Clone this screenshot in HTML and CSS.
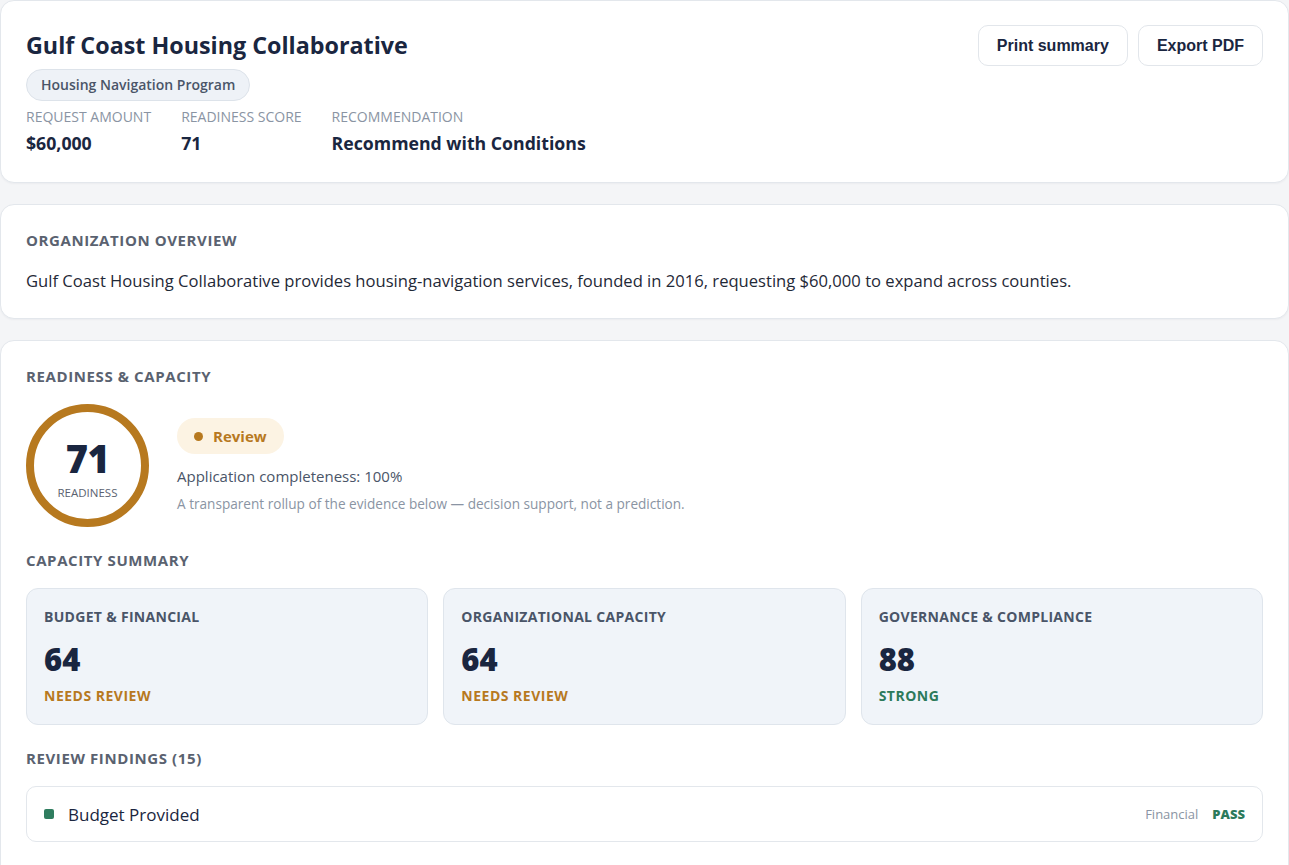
FILE: index.html
```html
<!DOCTYPE html>
<html lang="en">
<head>
  <meta charset="UTF-8" />
  <meta name="viewport" content="width=device-width, initial-scale=1.0" />
  <title>Gulf Coast Housing Collaborative - Review Summary</title>
  <link rel="stylesheet" href="styles.css">
</head>
<body>
  <main class="page">
    <!-- Header card -->
    <section class="card header-card">
      <div class="header-main">
        <h1>Gulf Coast Housing Collaborative</h1>
        <span class="program-pill">Housing Navigation Program</span>
        <div class="meta">
          <div class="meta-item">
            <div class="meta-label">Request Amount</div>
            <div class="meta-value">$60,000</div>
          </div>
          <div class="meta-item">
            <div class="meta-label">Readiness Score</div>
            <div class="meta-value">71</div>
          </div>
          <div class="meta-item">
            <div class="meta-label">Recommendation</div>
            <div class="meta-value">Recommend with Conditions</div>
          </div>
        </div>
      </div>
      <div class="actions">
        <button class="action-btn">Print summary</button>
        <button class="action-btn">Export PDF</button>
      </div>
    </section>

    <!-- Overview -->
    <section class="card">
      <h2 class="section-title">Organization Overview</h2>
      <p class="overview-text">Gulf Coast Housing Collaborative provides housing-navigation services, founded in 2016, requesting $60,000 to expand across counties.</p>
    </section>

    <!-- Readiness -->
    <section class="card readiness-card">
      <h2 class="section-title">Readiness &amp; Capacity</h2>
      <div class="readiness">
        <div class="score-ring">
          <span class="score-number">71</span>
          <span class="score-label">Readiness</span>
        </div>
        <div class="readiness-info">
          <span class="status-pill review"><span class="status-dot"></span>Review</span>
          <div class="completeness">Application completeness: 100%</div>
          <div class="readiness-note">A transparent rollup of the evidence below — decision support, not a prediction.</div>
        </div>
      </div>

      <h2 class="section-title spaced">Capacity Summary</h2>
      <div class="capacity-grid">
        <div class="capacity-card">
          <div class="capacity-label">Budget &amp; Financial</div>
          <div class="capacity-score">64</div>
          <div class="capacity-status review">Needs Review</div>
        </div>
        <div class="capacity-card">
          <div class="capacity-label">Organizational Capacity</div>
          <div class="capacity-score">64</div>
          <div class="capacity-status review">Needs Review</div>
        </div>
        <div class="capacity-card">
          <div class="capacity-label">Governance &amp; Compliance</div>
          <div class="capacity-score">88</div>
          <div class="capacity-status strong">Strong</div>
        </div>
      </div>

      <h2 class="section-title spaced">Review Findings (15)</h2>
      <div class="findings">
        <div class="finding">
          <span class="finding-dot pass"></span>
          <span class="finding-name">Budget Provided</span>
          <span class="finding-category">Financial</span>
          <span class="finding-result pass">Pass</span>
        </div>
      </div>
    </section>
  </main>
</body>
</html>
```

FILE: styles.css
```css
* {
  box-sizing: border-box;
}

body {
  margin: 0;
  font-family: "Segoe UI", "Open Sans", sans-serif;
  background-color: #f4f5f7;
  color: #1a2640;
}

.page {
  display: flex;
  flex-direction: column;
  gap: 21px;
}

.card {
  background: #ffffff;
  border: 1px solid #e3e7ec;
  border-radius: 14px;
  padding: 24px 25px;
  box-shadow: 0 1px 2px rgba(20, 30, 50, 0.04);
}

/* Header */
.header-card {
  display: flex;
  justify-content: space-between;
  align-items: flex-start;
  padding-bottom: 27px;
}

h1 {
  margin: 0;
  font-size: 23.3px;
  line-height: 40px;
  font-weight: 700;
  color: #1a2640;
}

.program-pill {
  display: inline-block;
  margin-top: 4px;
  padding: 5px 14px;
  font-size: 14px;
  line-height: 20px;
  font-weight: 600;
  color: #4a5568;
  background: #eef2f7;
  border: 1px solid #dde3ea;
  border-radius: 999px;
}

.meta {
  display: flex;
  gap: 30px;
  margin-top: 6px;
}

.meta-label {
  font-size: 14px;
  line-height: 20px;
  text-transform: uppercase;
  color: #8a94a3;
}

.meta-value {
  margin-top: 4px;
  font-size: 17.7px;
  line-height: 24px;
  font-weight: 700;
  color: #1a2640;
}

.actions {
  display: flex;
  gap: 10px;
}

.action-btn {
  height: 41px;
  padding: 0 18px;
  font-family: "Liberation Sans", Arial, sans-serif;
  font-size: 16px;
  font-weight: 700;
  color: #1a2640;
  background: #ffffff;
  border: 1px solid #e2e6eb;
  border-radius: 10px;
  cursor: pointer;
}

.action-btn:hover {
  background: #f6f8fa;
}

/* Sections */
.section-title {
  margin: 0 0 17px;
  font-size: 15px;
  line-height: 22px;
  font-weight: 700;
  letter-spacing: 0.6px;
  text-transform: uppercase;
  color: #5a6270;
}

.section-title.spaced {
  margin-top: 22px;
}

.overview-text {
  margin: 1px 0 0;
  font-size: 16.6px;
  line-height: 26px;
  color: #1f2937;
}

.readiness-card {
  padding-bottom: 40px;
}

/* Readiness */
.readiness {
  display: flex;
  align-items: center;
  gap: 28px;
}

.score-ring {
  width: 123px;
  height: 123px;
  flex-shrink: 0;
  border: 8px solid #b7791f;
  border-radius: 50%;
  display: flex;
  flex-direction: column;
  align-items: center;
  justify-content: center;
}

.score-number {
  font-size: 38px;
  line-height: 42px;
  font-weight: 800;
  letter-spacing: -0.5px;
  color: #1a2640;
  margin-top: 6px;
}

.score-label {
  margin-top: 6px;
  font-size: 11.5px;
  text-transform: uppercase;
  color: #5a6270;
}

.readiness-info {
  display: flex;
  flex-direction: column;
  align-items: flex-start;
}

.status-pill {
  display: inline-flex;
  align-items: center;
  gap: 10px;
  height: 36px;
  padding: 0 17px;
  border-radius: 999px;
  font-size: 15px;
  font-weight: 700;
}

.status-pill.review {
  background: #fcf3e3;
  color: #b7791f;
}

.status-dot {
  width: 9px;
  height: 9px;
  border-radius: 50%;
  background: currentColor;
}

.completeness {
  margin-top: 11px;
  font-size: 15px;
  line-height: 22px;
  color: #4a5568;
}

.readiness-note {
  margin-top: 7px;
  font-size: 13.6px;
  line-height: 19px;
  color: #8a94a3;
}

/* Capacity */
.capacity-grid {
  display: grid;
  grid-template-columns: repeat(3, 1fr);
  gap: 15px;
}

.capacity-card {
  background: #f0f4f9;
  border: 1px solid #dfe5ec;
  border-radius: 12px;
  padding: 18px 17px;
}

.capacity-label {
  font-size: 14px;
  line-height: 20px;
  font-weight: 700;
  letter-spacing: 0.3px;
  text-transform: uppercase;
  color: #4a5568;
}

.capacity-score {
  margin-top: 13px;
  font-size: 31px;
  line-height: 38px;
  font-weight: 800;
  color: #1a2640;
}

.capacity-status {
  margin-top: 8px;
  font-size: 14px;
  line-height: 20px;
  font-weight: 700;
  letter-spacing: 0.5px;
  text-transform: uppercase;
}

.capacity-status.review {
  color: #b7791f;
}

.capacity-status.strong {
  color: #2c7a5b;
}

/* Findings */
.findings {
  display: flex;
  flex-direction: column;
  gap: 10px;
}

.finding {
  display: flex;
  align-items: center;
  height: 56px;
  padding: 0 17px;
  background: #ffffff;
  border: 1px solid #e3e7ec;
  border-radius: 10px;
}

.finding-dot {
  width: 10px;
  height: 10px;
  border-radius: 2px;
  margin-right: 14px;
}

.finding-dot.pass {
  background: #2f7d5f;
}

.finding-name {
  flex: 1;
  font-size: 17px;
  color: #1a2640;
}

.finding-category {
  font-size: 13px;
  color: #8a94a3;
  margin-right: 14px;
}

.finding-result {
  font-size: 13px;
  font-weight: 800;
  text-transform: uppercase;
}

.finding-result.pass {
  color: #2c7a5b;
}
```
